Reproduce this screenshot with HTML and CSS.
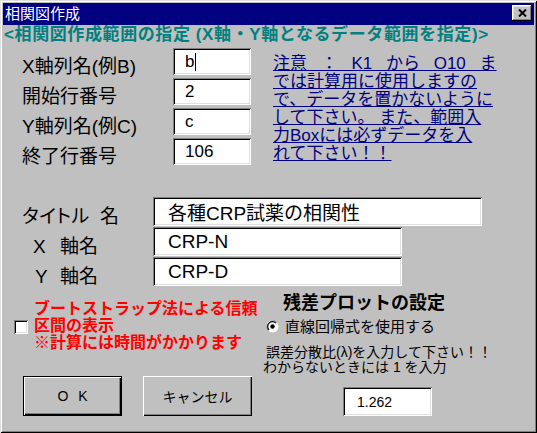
FILE: index.html
```html
<!DOCTYPE html>
<html lang="ja">
<head>
<meta charset="utf-8">
<title>相関図作成</title>
<link rel="stylesheet" href="styles.css">
</head>
<body>
<div class="window">
  <div class="titlebar">
    <span class="title">相関図作成</span>
    <span class="close">
      <svg width="9" height="8" viewBox="0 0 9 8"><path d="M1 0.5 L8 7.5 M8 0.5 L1 7.5" stroke="#000" stroke-width="2" fill="none"/></svg>
    </span>
  </div>
  <div class="heading">&lt;相関図作成範囲の指定 (X軸・Y軸となるデータ範囲を指定)&gt;</div>

  <div class="range">
    <div class="range-grid">
      <div class="lbl">X軸列名(例B)</div>
      <div class="field">b<span class="caret"></span></div>
      <div class="lbl">開始行番号</div>
      <div class="field">2</div>
      <div class="lbl">Y軸列名(例C)</div>
      <div class="field">c</div>
      <div class="lbl">終了行番号</div>
      <div class="field">106</div>
    </div>
    <p class="note"><span class="spaced">注意 ： K1 から O10 ま</span><br>では計算用に使用しますの<br>で、データを置かないように<br>して下さい。 また、範囲入<br>力Boxには必ずデータを入<br>れて下さい！！</p>
  </div>

  <div class="axes">
    <div class="lbl2"><span class="kata">タイトル</span>名</div>
    <div class="field big w329">各種CRP試薬の相関性</div>
    <div class="lbl2"><span class="axis x">X</span>軸名</div>
    <div class="field big w249">CRP-N</div>
    <div class="lbl2"><span class="axis y">Y</span>軸名</div>
    <div class="field big w249">CRP-D</div>
  </div>

  <div class="bottom">
    <div class="left">
      <div class="bootstrap">
        <span class="check"></span>
        <div class="red">ブートストラップ法による信頼<br>区間の表示<br>※計算には時間がかかります</div>
      </div>
      <div class="buttons">
        <div class="btn ok">O K</div>
        <div class="btn cancel">キャンセル</div>
      </div>
    </div>
    <div class="right">
      <div class="resid-title">残差プロットの設定</div>
      <div class="radio-row">
        <svg class="radio" width="13" height="13" viewBox="0 0 13 13">
          <circle cx="6.5" cy="6.5" r="6" fill="#fff"/>
          <path d="M10.7 2.3 A6 6 0 0 0 2.3 10.7" fill="none" stroke="#808080" stroke-width="1"/>
          <path d="M9.9 3.1 A4.8 4.8 0 0 0 3.1 9.9" fill="none" stroke="#000" stroke-width="1.2"/>
          <circle cx="6.5" cy="6.5" r="2.2" fill="#000"/>
        </svg>
        <span>直線回帰式を使用する</span>
      </div>
      <div class="lambda-text"><span class="indent">誤差分散比(λ)を入力して下さい！！</span><br>わからないときには 1 を入力</div>
      <div class="field small">1.262</div>
    </div>
  </div>
</div>
</body>
</html>
```
FILE: styles.css
```css
* { box-sizing: border-box; margin: 0; padding: 0; }

body {
  margin: 0;
  background: #c0c0c0;
  font-family: "Liberation Sans", "Noto Sans CJK JP", sans-serif;
  color: #000;
}

.window {
  width: 537px;
  height: 433px;
  background: #c0c0c0;
  padding: 3px;
  box-shadow: inset 1px 1px #dfdfdf, inset -1px -1px #000, inset 2px 2px #fff, inset -2px -2px #808080;
  display: flex;
  flex-direction: column;
}

.titlebar {
  height: 22px;
  background: #000080;
  color: #fff;
  display: flex;
  justify-content: space-between;
  align-items: flex-start;
  padding: 0 2px;
  font-size: 15px;
  line-height: 22px;
}

.close {
  margin-top: 2px;
  width: 20px;
  height: 16px;
  background: #c0c0c0;
  box-shadow: inset -1px -1px #000, inset 1px 1px #fff, inset -2px -2px #808080, inset 2px 2px #dfdfdf;
  display: flex;
  align-items: center;
  justify-content: center;
}

.heading {
  color: #008080;
  font-weight: bold;
  font-size: 17px;
  line-height: 20px;
  padding-left: 1px;
  letter-spacing: 0.6px;
  white-space: nowrap;
}

.range {
  display: flex;
  padding: 3px 0 0 19px;
}

.range-grid {
  display: grid;
  grid-template-columns: 151px 78px;
  grid-auto-rows: 27px;
  row-gap: 3px;
}

.lbl {
  font-size: 19px;
  line-height: 17px;
  padding-top: 10px;
  white-space: nowrap;
}

.field {
  background: #fff;
  box-shadow: inset 1px 1px #808080, inset -1px -1px #fff, inset 2px 2px #000, inset -2px -2px #dfdfdf;
  font-size: 17px;
  padding-left: 12px;
  display: flex;
  align-items: center;
  white-space: nowrap;
}

.caret {
  display: inline-block;
  width: 1px;
  height: 18px;
  background: #000;
  margin-left: 1px;
}

.note {
  margin: 7px 0 0 22px;
  color: #000080;
  font-size: 17px;
  line-height: 18px;
  text-decoration: underline;
  white-space: nowrap;
}

.spaced { word-spacing: 9px; }

.axes {
  display: grid;
  grid-template-columns: 131px auto;
  grid-auto-rows: 29px;
  row-gap: 1px;
  justify-items: start;
  padding-left: 19px;
  margin-top: 32px;
}

.lbl2 {
  font-size: 19px;
  line-height: 19px;
  padding-top: 10px;
  white-space: nowrap;
}

.kata {
  display: inline-block;
  width: 78px;
  font-feature-settings: "palt";
  letter-spacing: 0.5px;
}

.axis { display: inline-block; width: 27px; }
.axis.x { margin-left: 11px; }
.axis.y { margin-left: 13px; width: 25px; }

.field.big { font-size: 19px; padding-left: 15px; }
.w329 { width: 329px; }
.w249 { width: 249px; }

.bottom {
  display: flex;
}

.left {
  width: 260px;
  display: flex;
  flex-direction: column;
}

.bootstrap {
  display: flex;
  align-items: center;
  padding-left: 11px;
  margin-top: 14px;
}

.check {
  width: 14px;
  height: 14px;
  background: #fff;
  box-shadow: inset 1px 1px #808080, inset -1px -1px #fff, inset 2px 2px #000, inset -2px -2px #dfdfdf;
  margin-right: 6px;
  margin-top: 2px;
}

.red {
  color: #ff0000;
  font-weight: bold;
  font-size: 16px;
  line-height: 17px;
  white-space: nowrap;
}

.buttons {
  display: flex;
  gap: 21px;
  padding-left: 20px;
  margin-top: 25px;
}

.btn {
  height: 40px;
  background: #c0c0c0;
  font-size: 14px;
  display: flex;
  align-items: center;
  justify-content: center;
  box-shadow: inset 1px 1px #fff, inset -1px -1px #000, inset -2px -2px #808080;
}

.btn.ok {
  width: 99px;
  border: 1px solid #000;
  word-spacing: 6px;
}

.btn.cancel { width: 109px; }

.right {
  flex: 1;
  display: flex;
  flex-direction: column;
  align-items: flex-start;
}

.resid-title {
  font-weight: bold;
  font-size: 18px;
  line-height: 20px;
  padding-left: 20px;
  margin-top: 7px;
}

.radio-row {
  display: flex;
  align-items: center;
  gap: 6px;
  padding-left: 3px;
  margin-top: 5px;
  font-size: 15px;
  line-height: 17px;
}

.lambda-text {
  font-size: 14px;
  line-height: 15px;
  margin-top: 10px;
  white-space: nowrap;
}

.indent { padding-left: 3px; }

.field.small {
  width: 89px;
  height: 29px;
  font-size: 14px;
  padding-left: 14px;
  margin: 12px 0 0 80px;
}
```
